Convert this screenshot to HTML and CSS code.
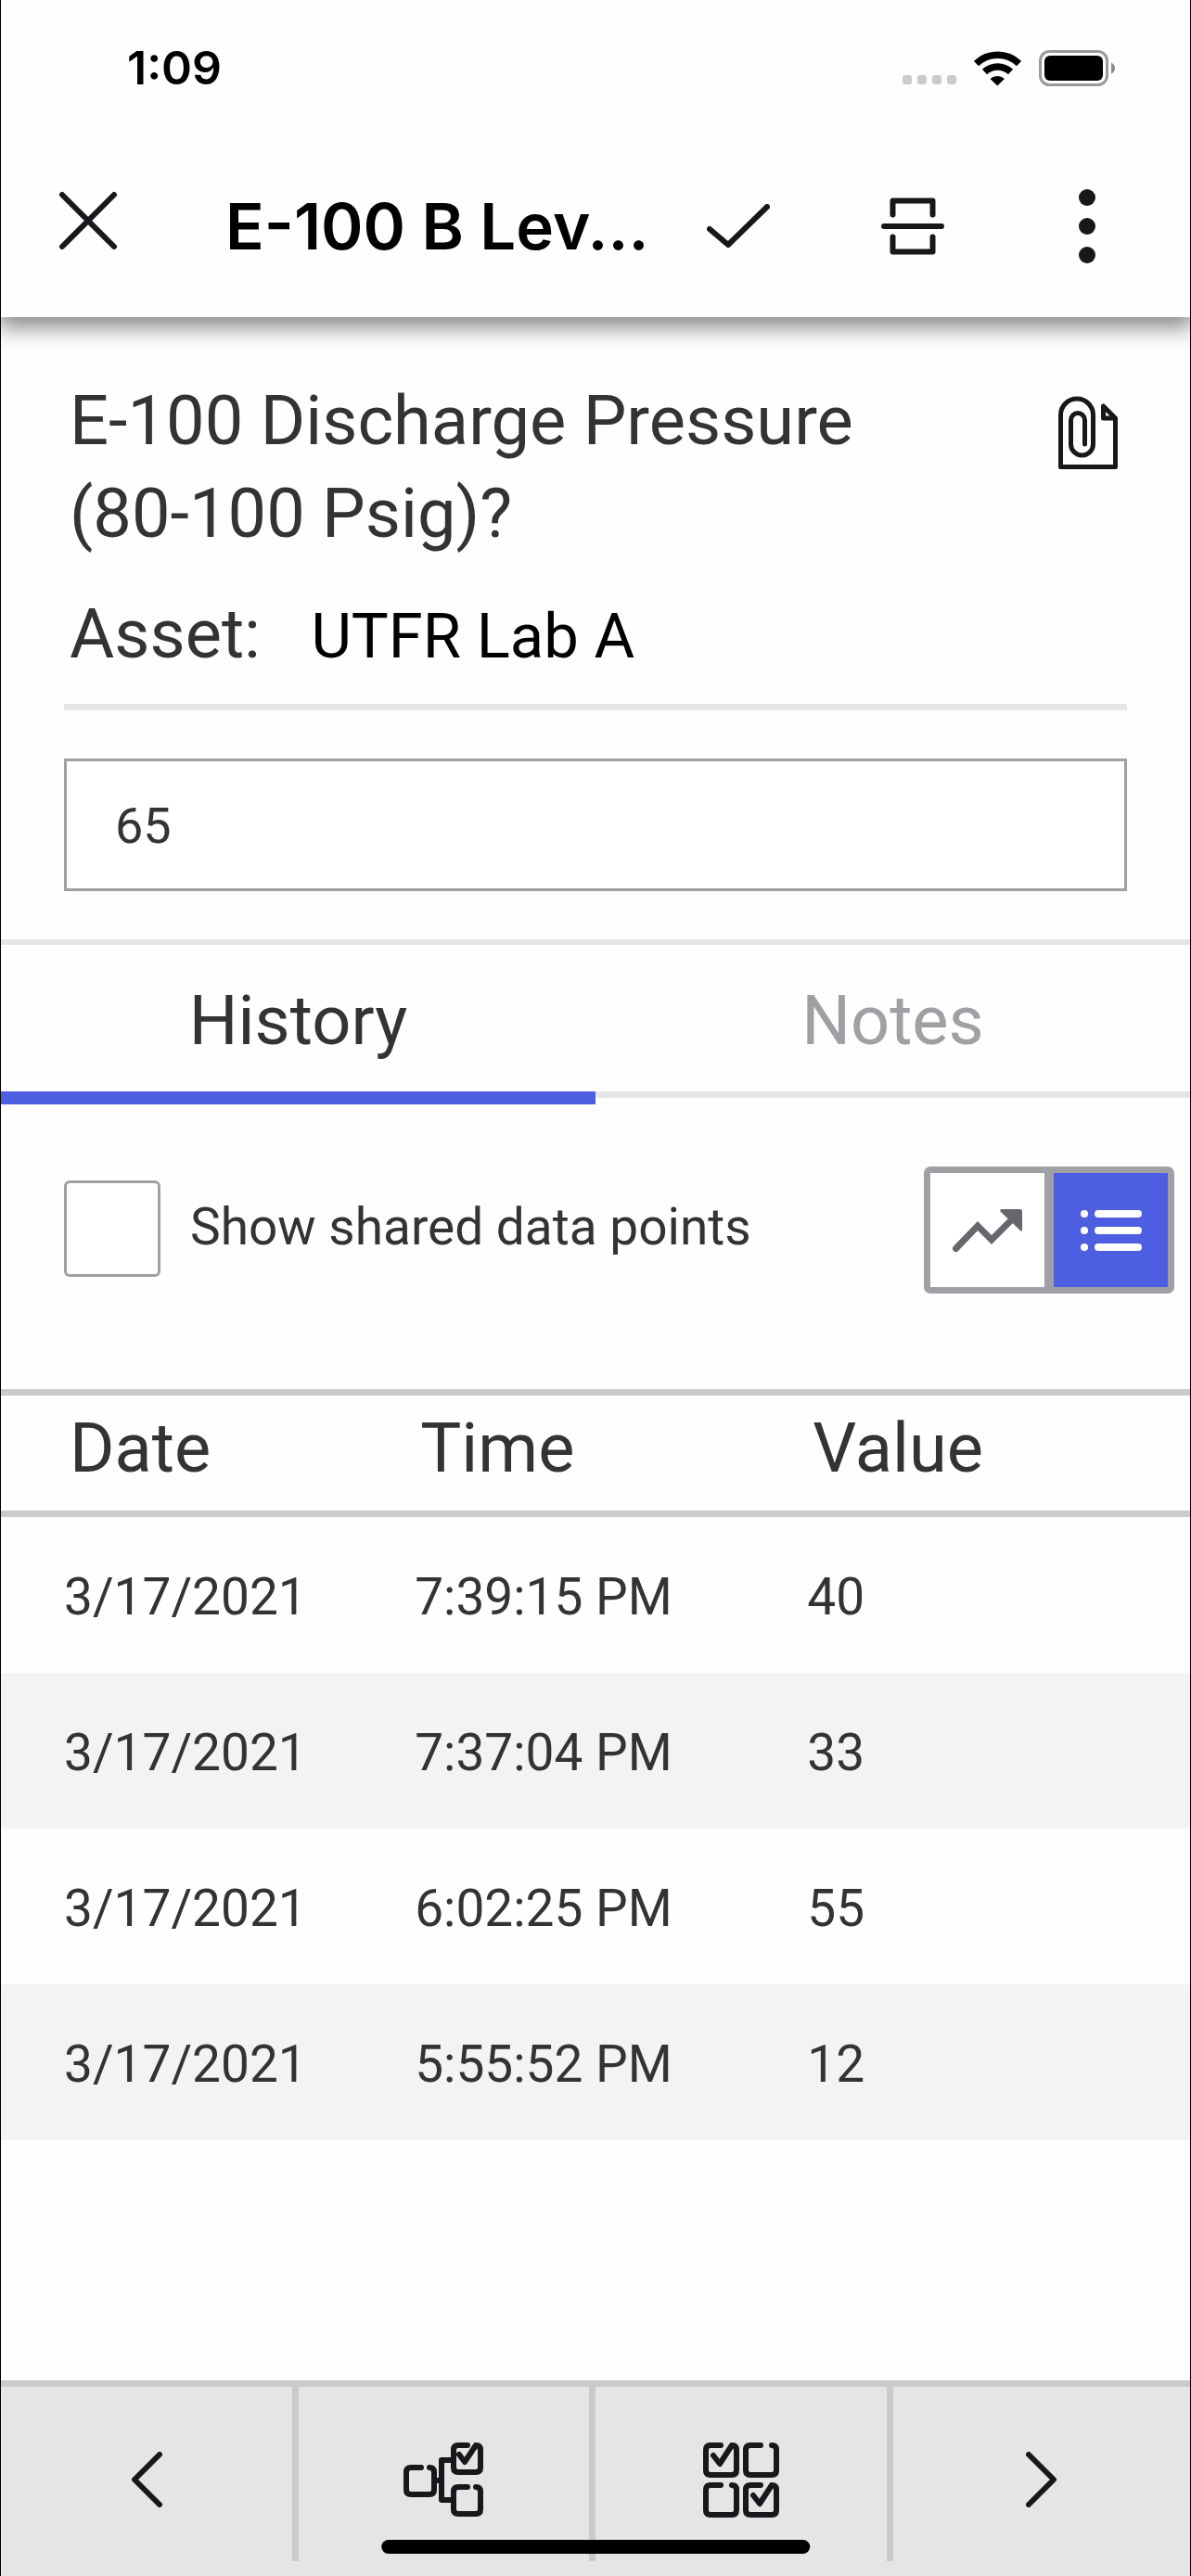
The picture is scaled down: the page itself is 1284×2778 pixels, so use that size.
FILE: index.html
```html
<!DOCTYPE html>
<html lang="en">
<head>
  <meta charset="UTF-8">
  <meta name="viewport" content="width=device-width, initial-scale=1.0">
  <title>E-100 B Level</title>
  <link rel="stylesheet" href="styles.css">
</head>
<body>

<!-- Status bar -->
<div class="status-bar">
  <span class="clock">1:09</span>
  <div class="status-icons">
    <svg width="58" height="12" viewBox="0 0 58 12" fill="#cbcbcb">
      <rect width="10" height="10" rx="3"/>
      <rect x="16" width="10" height="10" rx="3"/>
      <rect x="32" width="10" height="10" rx="3"/>
      <rect x="48" width="10" height="10" rx="3"/>
    </svg>
    <svg width="51" height="38" viewBox="0 0 51 38">
      <path d="M2.5 13.5a33 33 0 0 1 46 0" fill="none" stroke="#000" stroke-width="7.5"/>
      <path d="M11.5 22.5a20.5 20.5 0 0 1 28 0" fill="none" stroke="#000" stroke-width="7.5"/>
      <path d="M17.5 30a11.5 11.5 0 0 1 15.5 0l-7.75 7.5z"/>
    </svg>
    <svg width="82" height="39" viewBox="0 0 82 39">
      <rect x="1.5" y="1.5" width="72" height="36" rx="10" fill="none" stroke="#9a9a9a" stroke-width="3"/>
      <rect x="6" y="6" width="63" height="27" rx="6"/>
      <path d="M78 13.5q4 2 4 6t-4 6z" fill="#8a8a8a"/>
    </svg>
  </div>
</div>

<!-- Title bar -->
<header class="app-bar">
  <button class="icon-btn" aria-label="Close">
    <svg width="64" height="76" viewBox="0 0 64 76">
      <path d="M4 4l56 56M60 4L4 60"/>
    </svg>
  </button>
  <h1>E-100 B Lev...</h1>
  <button class="icon-btn" aria-label="Done">
    <svg width="68" height="48" viewBox="0 0 68 48">
      <path d="M3 27l20 17L65 3"/>
    </svg>
  </button>
  <button class="icon-btn" aria-label="Scan">
    <svg width="68" height="62" viewBox="0 0 68 62">
      <path d="M12.5 18.5V3.5h43v15M12.5 42.5v16h43v-16M3 31h62"/>
    </svg>
  </button>
  <button class="icon-btn" aria-label="More">
    <svg class="solid" width="18" height="80" viewBox="0 0 18 80">
      <circle cx="9" cy="9" r="9"/>
      <circle cx="9" cy="40" r="9"/>
      <circle cx="9" cy="71" r="9"/>
    </svg>
  </button>
</header>

<main>
  <!-- Question -->
  <section class="question">
    <div class="question-head">
      <h2><label for="reading">E-100 Discharge Pressure<br>(80-100 Psig)?</label></h2>
      <button class="attach-btn" aria-label="Attachments">
        <svg width="66" height="80" viewBox="0 0 66 80">
          <path d="M28.5 52V26a7.5 7.5 0 0 0-15 0v26a12 12 0 0 0 24 0V20.5a17.5 17.5 0 0 0-35 0v56h59V24L48.5 11v13H61"/>
        </svg>
      </button>
    </div>
    <p class="asset">Asset: <span>UTFR Lab A</span></p>
    <input class="reading" id="reading" type="text" inputmode="numeric" value="65">
  </section>

  <!-- Tabs -->
  <div class="tabs" role="tablist">
    <button class="tab active" role="tab" aria-selected="true">History</button>
    <button class="tab" role="tab" aria-selected="false">Notes</button>
  </div>

  <div class="options">
    <input type="checkbox" id="shared">
    <label for="shared">Show shared data points</label>
    <div class="view-toggle">
      <button aria-label="Chart view">
        <svg width="76" height="48" viewBox="0 0 76 48">
          <path d="M3.5 43.5L27 19l15 15L66 10" fill="none" stroke="#66676c" stroke-width="7" stroke-linecap="round"/>
          <path d="M53 1h20q2 0 2 2v20q0 3-2 1L52 4q-2-3 1-3z" fill="#66676c"/>
        </svg>
      </button>
      <button class="selected" aria-label="List view">
        <svg width="66" height="44" viewBox="0 0 66 44" fill="#fff">
          <circle cx="4" cy="4" r="4"/>
          <circle cx="4" cy="22" r="4"/>
          <circle cx="4" cy="40" r="4"/>
          <rect x="15" width="51" height="8" rx="4"/>
          <rect x="15" y="18" width="51" height="8" rx="4"/>
          <rect x="15" y="36" width="51" height="8" rx="4"/>
        </svg>
      </button>
    </div>
  </div>

  <!-- History -->
  <table class="history">
    <thead>
      <tr><th>Date</th><th>Time</th><th>Value</th></tr>
    </thead>
    <tbody>
      <tr><td>3/17/2021</td><td>7:39:15 PM</td><td>40</td></tr>
      <tr><td>3/17/2021</td><td>7:37:04 PM</td><td>33</td></tr>
      <tr><td>3/17/2021</td><td>6:02:25 PM</td><td>55</td></tr>
      <tr><td>3/17/2021</td><td>5:55:52 PM</td><td>12</td></tr>
    </tbody>
  </table>
</main>

<!-- Bottom navigation -->
<nav class="bottom-nav">
  <button aria-label="Previous">
    <svg width="34" height="60" viewBox="0 0 34 60">
      <path d="M31 3L4 30l27 27"/>
    </svg>
  </button>
  <button aria-label="Question tree">
    <svg width="86" height="80" viewBox="0 0 86 80">
      <path d="M19 27H8q-5 0-5 5v19q0 5 5 5h20q5 0 5-5V32q0-5-5-5"/>
      <path d="M34 41h7M53 19H41v43h12"/>
      <path d="M69 3H59q-5 0-5 5v19q0 5 5 5h19q5 0 5-5V8q0-5-5-5L66 21l-6-8"/>
      <path d="M69 48H59q-5 0-5 5v19q0 5 5 5h19q5 0 5-5V53q0-5-5-5"/>
    </svg>
  </button>
  <button aria-label="Question grid">
    <svg width="82" height="82" viewBox="0 0 82 82">
      <path d="M19 4H8q-5 0-5 5v22q0 5 5 5h23q5 0 5-5V9q0-5-5-5L18 24l-7-9"/>
      <path d="M62 4H51q-5 0-5 5v22q0 5 5 5h23q5 0 5-5V9q0-5-5-5"/>
      <path d="M19 47H8q-5 0-5 5v22q0 5 5 5h23q5 0 5-5V52q0-5-5-5"/>
      <path d="M62 47H51q-5 0-5 5v22q0 5 5 5h23q5 0 5-5V52q0-5-5-5L61 67l-7-9"/>
    </svg>
  </button>
  <button aria-label="Next">
    <svg width="34" height="60" viewBox="0 0 34 60">
      <path d="M3 3l27 27L3 57"/>
    </svg>
  </button>
  <div class="home-indicator"></div>
</nav>

</body>
</html>
```
FILE: styles.css
```css
* {
  box-sizing: border-box;
}

body {
  margin: 0;
  min-height: 100vh;
  display: flex;
  flex-direction: column;
  border-left: 1px solid #000;
  border-right: 1px solid #000;
  background: #fefefe;
  color: #333;
  font-family: Roboto, "Liberation Sans", sans-serif;
}

h1, h2, p {
  margin: 0;
  font-weight: 400;
}

button {
  margin: 0;
  padding: 0;
  border: 0;
  background: none;
  color: inherit;
  font-family: inherit;
}

svg {
  display: block;
}

.status-bar {
  display: flex;
  align-items: center;
  justify-content: space-between;
  height: 146px;
  padding: 0 81px 0 136px;
}

.clock {
  color: #000;
  font-family: Inter, sans-serif;
  font-size: 50px;
  font-weight: 600;
  line-height: 60px;
}

.status-icons {
  display: flex;
  align-items: flex-end;
  gap: 19px;
}

.app-bar {
  display: flex;
  align-items: center;
  height: 196px;
  padding-right: 17px;
  box-shadow: 0 6px 24px 4px rgba(0, 0, 0, 0.5);
  clip-path: inset(0 0 -60px 0);
}

.app-bar h1 {
  flex: 1;
  min-width: 0;
  padding-left: 54px;
  color: #000;
  font-family: Inter, sans-serif;
  font-size: 69px;
  font-weight: 600;
  line-height: 100px;
  white-space: nowrap;
}

.icon-btn {
  display: flex;
  justify-content: center;
  width: 188px;
}

.icon-btn svg,
.attach-btn svg,
.bottom-nav svg {
  fill: none;
  stroke: #17181b;
  stroke-width: 6;
  stroke-linecap: round;
  stroke-linejoin: round;
}

.attach-btn svg {
  stroke-width: 5;
}

.icon-btn .solid {
  fill: #17181b;
  stroke: none;
}

.question {
  padding: 62px 68px 52px;
  border-bottom: 6px solid #e5e5e5;
}

.question-head {
  display: flex;
  align-items: flex-start;
  justify-content: space-between;
  padding: 0 8px 0 6px;
}

.question h2 {
  font-size: 74px;
  line-height: 100px;
}

.attach-btn {
  margin-top: 23px;
}

.asset {
  padding: 30px 6px 25px;
  border-bottom: 7px solid #e5e5e5;
  font-size: 74px;
  line-height: 100px;
}

.asset span {
  margin-left: 36px;
  color: #000;
  font-size: 67px;
  line-height: 1;
}

.reading {
  display: block;
  width: 100%;
  height: 143px;
  margin-top: 52px;
  padding: 2px 52px 0;
  border: 3px solid #9fa0a4;
  background: #fff;
  color: #333;
  font-family: inherit;
  font-size: 54px;
}

.tabs {
  display: flex;
  align-items: flex-start;
}

.tab {
  flex: 1;
  padding: 32px 0 26px;
  border-bottom: 7px solid #e5e5e5;
  color: #9fa0a4;
  font-size: 74px;
  line-height: 100px;
}

.tab.active {
  border-bottom: 14px solid #4d5ee0;
  color: #333;
}

.options {
  display: flex;
  align-items: center;
  height: 307px;
  padding: 0 17px 36px 68px;
}

.options input {
  appearance: none;
  width: 104px;
  height: 104px;
  margin: 0 32px 4px 0;
  border: 3px solid #9fa0a4;
  border-radius: 6px;
  background: #fff;
}

.options label {
  flex: 1;
  padding-bottom: 8px;
  font-size: 55px;
}

.view-toggle {
  display: flex;
  gap: 10px;
  padding: 7px;
  border-radius: 7px;
  background: #9fa0a4;
}

.view-toggle button {
  display: flex;
  align-items: center;
  justify-content: center;
  width: 123px;
  height: 123px;
  background: #fff;
}

.view-toggle .selected {
  background: #4d5ee0;
}

.history {
  width: 100%;
  border-spacing: 0;
  table-layout: fixed;
  text-align: left;
}

.history th {
  height: 138px;
  padding: 0 0 12px 74px;
  border-top: 7px solid #cacaca;
  border-bottom: 7px solid #cacaca;
  font-size: 74px;
  font-weight: 400;
}

.history td {
  height: 168px;
  padding: 4px 0 0 68px;
  font-size: 55px;
}

.history th:nth-child(1) {
  width: 29.5%;
}

.history th:nth-child(2) {
  width: 33%;
}

.history tbody tr:nth-child(even) {
  background: #f2f3f5;
}

.bottom-nav {
  position: relative;
  display: flex;
  margin-top: auto;
  padding-bottom: 16px;
  border-top: 7px solid #cacaca;
  background: #e5e5e5;
}

.bottom-nav button {
  display: flex;
  align-items: center;
  justify-content: center;
  width: 25%;
  height: 188px;
  padding-top: 12px;
  border-right: 7px solid #cacaca;
}

.bottom-nav button:last-of-type {
  border-right: 0;
}

/* sits over the nav buttons */
.home-indicator {
  position: absolute;
  bottom: 24px;
  left: 50%;
  width: 36%;
  height: 15px;
  border-radius: 8px;
  background: #000;
  transform: translateX(-50%);
}
```
